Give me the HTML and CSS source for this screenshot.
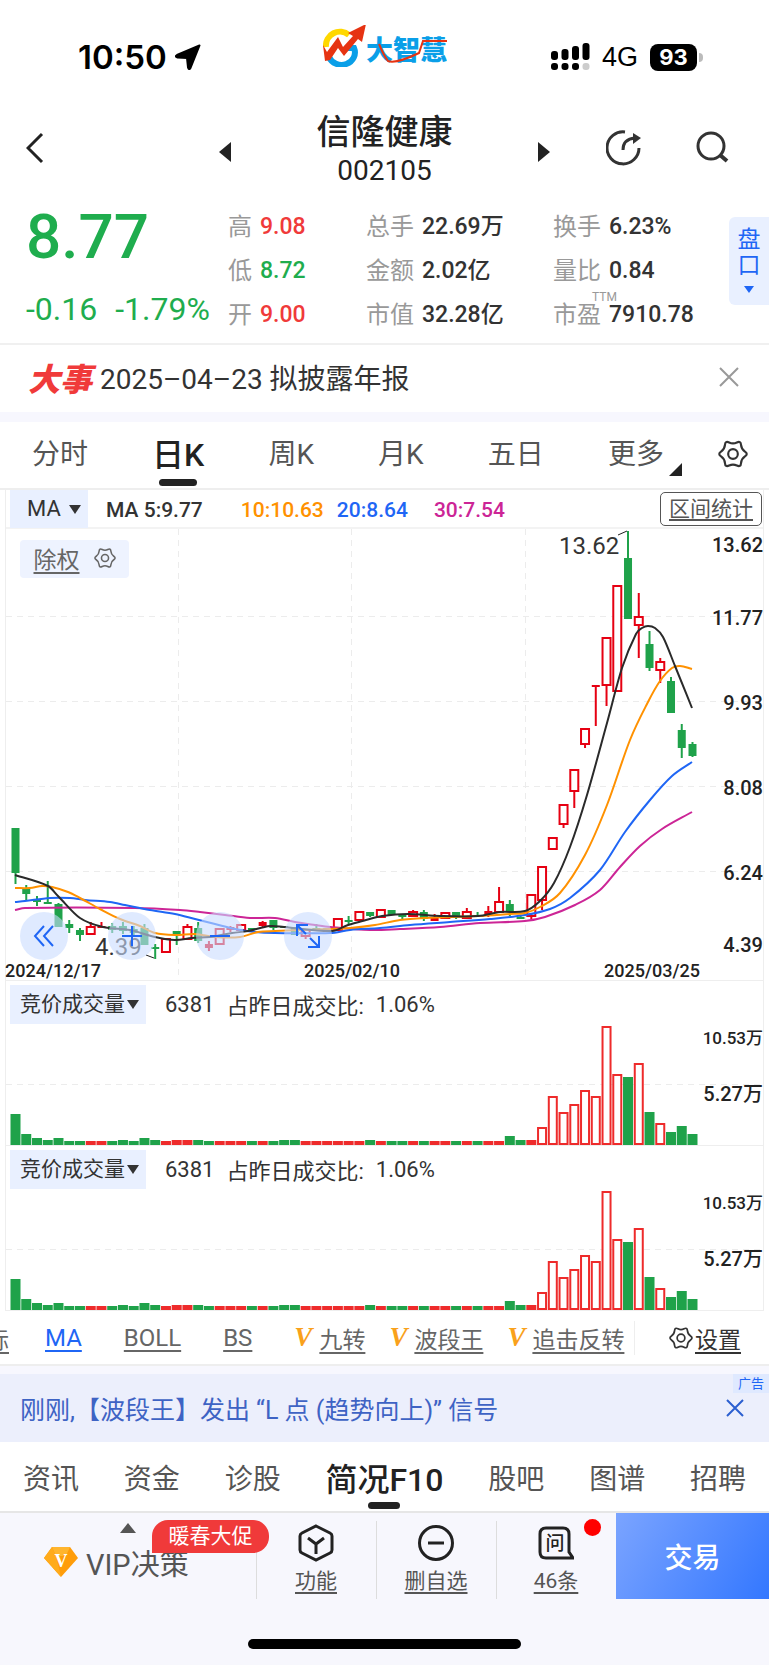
FILE: index.html
```html
<!DOCTYPE html>
<html lang="zh-CN">
<head>
    <meta charset="UTF-8">
    <meta name="viewport" content="width=device-width, initial-scale=1.0">
    <title>信隆健康 002105</title>
    <link rel="stylesheet" href="styles.css">
</head>
<body>
    <svg class="sprite" width="0" height="0" aria-hidden="true">
        <symbol id="gear" viewBox="-1 -1 28 28">
            <path d="M24.15 15.25Q20.8 17.5 20.5 21.55Q20.25 25.6 16.6 23.8Q13 22 9.4 23.8Q5.75 25.6 5.5 21.55Q5.2 17.5 1.85 15.25Q-1.5 13 1.85 10.75Q5.2 8.5 5.5 4.45Q5.75 .4 9.4 2.2Q13 4 16.6 2.2Q20.25 .4 20.5 4.45Q20.8 8.5 24.15 10.75Q27.5 13 24.15 15.25Z" fill="none" stroke="currentColor" stroke-width="2"/>
            <circle cx="13" cy="13" r="4.5" fill="none" stroke="currentColor" stroke-width="2"/>
        </symbol>
    </svg>

    <div class="status">
        <div class="clock">
            <span>10:50</span>
            <svg width="26" height="26" viewBox="0 0 26 26"><path d="M24.5 1.5L15.500 24q-1.500 2.500-2.500-.5L12 14 2.500 13.500q-3-1-.5-2.500Z" fill="#000" stroke="#000" stroke-width="2" stroke-linejoin="round"/></svg>
        </div>
        <svg class="logo" width="124" height="42" viewBox="0 0 124 42" role="img" aria-label="大智慧">
            <path d="M3 22a14 14 0 0 1 23-12" fill="none" stroke="#ffd800" stroke-width="6"/>
            <path d="M6 32a13 12 0 0 0 25-9h-9" fill="none" stroke="#0a9fe8" stroke-width="6"/>
            <path d="M0 20l4 7 11-15 5 10 10-11-5-3 18-9-4 18-4-3-14 17-6-8-8 12-5 1z" fill="#e63312"/>
            <text class="logo-text" x="43" y="35">大智慧</text>
            <path d="M56 19q5 12 9 17q8 3 31-8l4-12h24" fill="none" stroke="#e63312" stroke-width="2"/>
        </svg>
        <div class="signal">
            <svg width="39" height="28" viewBox="0 0 39 28">
                <rect x="0" y="8" width="7" height="9" rx="3"/><rect x="10.500" y="6" width="7" height="11" rx="3"/><rect x="21" y="3" width="7" height="14" rx="3"/><rect x="31.500" y="0" width="7" height="17" rx="3"/>
                <rect x="0" y="20" width="7" height="7" rx="3"/><rect x="10.500" y="20" width="7" height="7" rx="3"/><rect x="21" y="20" width="7" height="7" rx="3"/><rect x="31.500" y="20" width="7" height="7" rx="3" fill="#ccc"/>
            </svg>
            <span class="net">4G</span>
            <span class="battery">93</span>
        </div>
    </div>

    <header class="titlebar">
        <button class="back" aria-label="返回"><svg width="18" height="32" viewBox="0 0 18 32"><path d="M16 2L2 16l14 14" fill="none" stroke="#222" stroke-width="3"/></svg></button>
        <div class="stock">
            <button aria-label="上一只"><svg width="12" height="20" viewBox="0 0 12 20"><path d="M12 0v20L0 10z" fill="#222"/></svg></button>
            <div>
                <h1>信隆健康</h1>
                <p>002105</p>
            </div>
            <button aria-label="下一只"><svg width="12" height="20" viewBox="0 0 12 20"><path d="M0 0v20l12-10z" fill="#222"/></svg></button>
        </div>
        <div class="tools">
            <button aria-label="分享"><svg width="36" height="36" viewBox="0 0 36 36"><path d="M19 2A16 16 0 1 0 33 18" fill="none" stroke="#333" stroke-width="3"/><path d="M17 20q0-11 12-12" fill="none" stroke="#333" stroke-width="3"/><path d="M27 3l8 5-8 6z" fill="#333"/></svg></button>
            <button aria-label="搜索"><svg width="34" height="34" viewBox="0 0 34 34"><circle cx="16" cy="15" r="13" fill="none" stroke="#333" stroke-width="3"/><path d="M25 24l7 6" stroke="#333" stroke-width="4"/></svg></button>
        </div>
    </header>

    <section class="quote">
        <div class="price">
            <strong>8.77</strong>
            <p><span>-0.16</span><span>-1.79%</span></p>
        </div>
        <dl>
            <div><dt>高</dt><dd class="up">9.08</dd></div>
            <div><dt>总手</dt><dd>22.69万</dd></div>
            <div><dt>换手</dt><dd>6.23%</dd></div>
            <div><dt>低</dt><dd class="down">8.72</dd></div>
            <div><dt>金额</dt><dd>2.02亿</dd></div>
            <div><dt>量比</dt><dd>0.84</dd></div>
            <div><dt>开</dt><dd class="up">9.00</dd></div>
            <div><dt>市值</dt><dd>32.28亿</dd></div>
            <div><dt>市盈<sup>TTM</sup></dt><dd>7910.78</dd></div>
        </dl>
        <button class="pankou"><span>盘</span><span>口</span><i class="tri"></i></button>
    </section>

    <section class="news">
        <b>大事</b>
        <a href="#">2025–04–23 拟披露年报</a>
        <button aria-label="关闭"><svg width="20" height="20" viewBox="0 0 20 20"><path d="M1 1l18 18M19 1L1 19" stroke="#999" stroke-width="2"/></svg></button>
    </section>

    <nav class="periods">
        <a href="#">分时</a>
        <a href="#" class="active">日K</a>
        <a href="#">周K</a>
        <a href="#">月K</a>
        <a href="#">五日</a>
        <a href="#" class="more">更多</a>
        <button aria-label="图表设置"><svg width="30" height="30"><use href="#gear"/></svg></button>
    </nav>

    <main class="frame">
        <div class="ma-row">
            <label class="pick"><select aria-label="主图指标"><option>MA</option></select></label>
            <span class="ma5">MA 5:9.77</span>
            <span class="ma10">10:10.63</span>
            <span class="ma20">20:8.64</span>
            <span class="ma30">30:7.54</span>
            <button class="stats">区间统计</button>
        </div>

        <div class="kline">
            <svg id="kline" class="plot" viewBox="6 529 757 451">
                <path class="grid" d="M6 616.500H763M6 701.500H763M6 786.500H763M6 871.500H763M178.500 529V980M351.500 529V980M525.500 529V980"/>
                <g id="candles"></g>
                <g id="averages"></g>
                <path d="M618 535l9-4M146 955l8 3" stroke="#222" fill="none"/>
                <g class="note">
                    <text x="559" y="554">13.62</text>
                    <text x="95" y="955">4.39</text>
                </g>
                <g class="axis">
                    <text x="763" y="552">13.62</text>
                    <text x="763" y="625">11.77</text>
                    <text x="763" y="710">9.93</text>
                    <text x="763" y="795">8.08</text>
                    <text x="763" y="880">6.24</text>
                    <text x="763" y="952">4.39</text>
                </g>
                <g class="dates">
                    <text x="5" y="977">2024/12/17</text>
                    <text x="304" y="977">2025/02/10</text>
                    <text x="604" y="977">2025/03/25</text>
                </g>
            </svg>
            <button class="adjust"><u>除权</u><svg width="22" height="22"><use href="#gear"/></svg></button>
            <div class="controls">
                <button aria-label="左移"><svg width="24" height="24" viewBox="0 0 24 24"><path d="M12 2L3 12l9 10M21 2l-9 10 9 10"/></svg></button>
                <button aria-label="放大"><svg width="24" height="24" viewBox="0 0 24 24"><path d="M2 12h20M12 2v20"/></svg></button>
                <button aria-label="缩小"><svg width="24" height="24" viewBox="0 0 24 24"><path d="M2 12h20"/></svg></button>
                <button aria-label="全屏"><svg width="26" height="26" viewBox="0 0 26 26"><path d="M2 13V2h11M2 2l9 9M24 13v11H13M24 24l-9-9"/></svg></button>
            </div>
        </div>

        <div class="volume">
            <div class="vol-head">
                <label class="pick"><select aria-label="副图指标一"><option>竞价成交量</option></select></label>
                <span>6381</span><span>占昨日成交比:</span><span>1.06%</span>
            </div>
            <svg class="plot bars" viewBox="6 0 757 121">
                <path class="grid" d="M6 60.500H763"/>
                <g class="axis"><text class="small" x="763" y="20">10.53万</text><text x="763" y="77">5.27万</text></g>
            </svg>
        </div>
        <div class="volume">
            <div class="vol-head">
                <label class="pick"><select aria-label="副图指标二"><option>竞价成交量</option></select></label>
                <span>6381</span><span>占昨日成交比:</span><span>1.06%</span>
            </div>
            <svg class="plot bars" viewBox="6 0 757 121">
                <path class="grid" d="M6 60.500H763"/>
                <g class="axis"><text class="small" x="763" y="20">10.53万</text><text x="763" y="77">5.27万</text></g>
            </svg>
        </div>
    </main>

    <nav class="indicators">
        <a href="#" class="cut">指标</a>
        <a href="#" class="line active">MA</a>
        <a href="#" class="line">BOLL</a>
        <a href="#" class="line">BS</a>
        <span><i>V</i><a href="#">九转</a></span>
        <span><i>V</i><a href="#">波段王</a></span>
        <span><i>V</i><a href="#">追击反转</a></span>
        <button><svg width="24" height="24"><use href="#gear"/></svg><u>设置</u></button>
    </nav>

    <aside class="ad">
        <a href="#">刚刚,【波段王】发出 “L 点 (趋势向上)” 信号</a>
        <small>广告</small>
        <button aria-label="关闭广告"><svg width="18" height="18" viewBox="0 0 18 18"><path d="M1 1l16 16M17 1L1 17" stroke="#2b5fd0" stroke-width="2"/></svg></button>
    </aside>

    <nav class="sections">
        <a href="#">资讯</a>
        <a href="#">资金</a>
        <a href="#">诊股</a>
        <a href="#" class="active">简况F10</a>
        <a href="#">股吧</a>
        <a href="#">图谱</a>
        <a href="#">招聘</a>
    </nav>

    <footer>
        <div class="actions">
            <button class="vip">
                <i class="tri"></i>
                <svg width="34" height="32" viewBox="0 0 34 32"><path d="M8 1h18l8 11-17 19L0 12z" fill="#ff9d0a"/><path d="M8 1h18l-4 9H12z" fill="#ffb52e"/><path d="M0 12l8-11 4 9 5 21z" fill="#ffab1c"/><text class="gem" x="17" y="21">V</text></svg>
                <span>VIP决策</span>
                <em>暖春大促</em>
            </button>
            <button class="act">
                <svg width="36" height="38" viewBox="0 0 36 38"><path d="M18 2L32 9Q34 10 34 12V26Q34 28 32 29L18 36 4 29Q2 28 2 26V12Q2 10 4 9ZM10 14l8 6 8-6M18 20v10" fill="none" stroke="#222" stroke-width="3"/></svg>
                <u>功能</u>
            </button>
            <button class="act">
                <svg width="36" height="38" viewBox="0 0 36 38"><circle cx="18" cy="19" r="16.500" fill="none" stroke="#222" stroke-width="3"/><path d="M10 19h16" stroke="#222" stroke-width="3"/></svg>
                <u>删自选</u>
            </button>
            <button class="act">
                <svg width="36" height="38" viewBox="0 0 36 38"><path d="M8 4H25Q31 4 31 10V28L35 34H8Q2 34 2 28V10Q2 4 8 4Z" fill="none" stroke="#222" stroke-width="3"/><text class="ask" x="17" y="26">问</text></svg>
                <u>46条</u>
                <i class="dot"></i>
            </button>
            <button class="trade">交易</button>
        </div>
        <div class="home"></div>
    </footer>

    <script>
        const RED = "#ee2b2b", GREEN = "#1fa24a";
        const FIRST = 15.5, STEP = 10.746;

        // colour, high, body top, body bottom, low
        const candles = [
            ["g",828,828,873,884],["g",885,888,894,901],["g",896,900,902,906],["g",881,902,904,904],
            ["g",903,904,927,927],["g",920,924,928,933],["g",928,930,935,941],["r",922,927,934,935],
            ["f",922,926,928,928],["g",923,926,930,933],["g",922,926,931,934],["g",926,929,933,936],
            ["g",924,928,945,945],["g",944,947,949,959],["r",939,939,952,952],["g",931,931,935,945],
            ["r",924,927,939,939],["g",922,928,941,943],["f",941,944,948,951],["r",929,929,944,944],
            ["f",926,927,930,932],["r",924,925,930,930],["g",928,928,930,930],["f",921,922,926,928],
            ["g",920,920,928,930],["g",926,926,928,928],["g",927,927,935,935],["r",929,930,936,939],
            ["g",924,928,930,931],["g",928,928,930,930],["r",919,919,930,930],["g",916,920,922,924],
            ["r",911,912,920,920],["g",912,912,916,917],["r",909,910,917,917],["g",910,910,915,915],
            ["g",915,915,917,919],["r",910,912,916,917],["g",910,912,919,921],["f",914,917,921,921],
            ["r",912,913,918,919],["g",912,912,917,919],["r",908,912,918,918],["g",912,915,917,917],
            ["f",906,911,914,917],["r",887,902,912,912],["g",900,904,912,916],["g",915,917,919,919],
            ["r",894,895,916,919],["r",867,867,900,910],["r",837,838,849,850],["r",804,805,824,828],
            ["r",769,770,791,808],["r",728,729,744,748],["f",686,685,687,726],["r",638,638,685,706],
            ["r",585,586,691,691],["g",531,558,619,619],["r",593,617,625,658],["g",631,644,668,671],
            ["r",658,662,670,683],["g",677,681,713,713],["g",724,730,748,758],["g",742,744,756,757]
        ];

        const averages = {
            "#cc2596": [[15,910],[25,908],[135,908],[180,910],[200,912],[225,915],[250,918],[275,918],[295,922],[315,925],[330,927],[370,930],[400,929],[440,927],[480,923],[525,921],[545,917],[575,905],[600,890],[620,867],[640,846],[662,829],[692,812]],
            "#1f66f5": [[15,902],[25,901],[50,898],[70,898],[85,900],[110,902],[125,905],[150,910],[175,914],[195,919],[215,924],[235,929],[255,932],[275,933],[330,933],[350,930],[380,928],[410,925],[450,922],[490,919],[525,915],[550,909],[570,898],[600,870],[625,832],[650,800],[672,776],[692,762]],
            "#ff9100": [[15,888],[30,888],[42,886],[52,887],[68,892],[80,898],[100,909],[120,919],[140,926],[155,933],[175,935],[195,934],[215,937],[240,937],[258,932],[275,931],[300,930],[330,929],[350,928],[375,925],[400,920],[425,918],[478,916],[510,914],[525,913],[540,907],[560,893],[585,855],[607,805],[630,740],[648,702],[660,681],[672,668],[680,666],[692,669]],
            "#2a2a2a": [[15,875],[48,886],[58,896],[80,918],[103,927],[130,930],[155,937],[175,940],[192,938],[210,937],[232,933],[248,931],[270,926],[284,927],[332,931],[348,925],[366,920],[382,916],[408,914],[440,916],[478,916],[500,912],[525,911],[540,901],[554,883],[570,847],[587,795],[607,723],[622,668],[636,634],[642,628],[648,626],[655,628],[663,637],[675,666],[692,708]]
        };

        // bar heights, negative for a falling day
        const volumes = [-31,-11,-7,-5,-7,-4,-4,4,4,-4,-5,-4,-7,-5,4,5,5,-5,-4,4,4,4,-4,4,-4,-5,-5,4,4,4,4,4,4,-5,4,-4,-4,4,-4,4,4,-4,4,-4,4,4,-9,-5,5,17,48,32,40,54,48,118,70,-68,81,-33,21,-13,-19,-11];

        // smooth curve through the points
        function curve(p) {
            let d = `M${p[0]}`;
            for (let i = 0; i < p.length - 1; i++) {
                const a = p[i - 1] || p[i], b = p[i], c = p[i + 1], e = p[i + 2] || c;
                const third = (c[0] - b[0]) / 3;
                const s1 = (c[1] - a[1]) / (c[0] - a[0]), s2 = (e[1] - b[1]) / (e[0] - b[0]);
                d += `C${b[0] + third} ${b[1] + third * s1} ${c[0] - third} ${c[1] - third * s2} ${c}`;
            }
            return d;
        }

        document.getElementById("candles").innerHTML = candles.map(([type, high, top, bottom, low], i) => {
            const x = FIRST + i * STEP;
            const color = type === "g" ? GREEN : "#e60012";
            const body = type === "r"
                ? `<rect x="${x - 4}" y="${top}" width="8" height="${bottom - top}" fill="#fff" stroke="${color}" stroke-width="2"/>`
                : `<rect x="${x - 4}" y="${top}" width="8" height="${bottom - top}" fill="${color}"/>`;
            return `<path d="M${x} ${high}V${low}" stroke="${color}" stroke-width="2"/>${body}`;
        }).join("");

        document.getElementById("averages").innerHTML = Object.entries(averages).map(([color, points]) =>
            `<path d="${curve(points)}" fill="none" stroke="${color}" stroke-width="2"/>`
        ).join("");

        document.querySelectorAll(".bars").forEach(svg => {
            svg.innerHTML += volumes.map((v, i) => {
                const h = Math.abs(v), x = FIRST - 5 + i * STEP;
                return v > 5
                    ? `<rect x="${x + 1}" y="${121 - h}" width="8" height="${h - 1}" fill="#fff" stroke="${RED}" stroke-width="2"/>`
                    : `<rect x="${x}" y="${121 - h}" width="10" height="${h}" fill="${v < 0 ? GREEN : RED}"/>`;
            }).join("");
        });
    </script>
</body>
</html>
```

FILE: styles.css
```css
* {
    margin: 0;
    padding: 0;
    box-sizing: border-box;
}

body {
    font-family: Roboto, "Noto Sans CJK SC", sans-serif;
    background-color: #fff;
    color: #333;
    min-height: 100vh;
    display: flex;
    flex-direction: column;
}

button, select {
    font: inherit;
    color: inherit;
    background: none;
    border: none;
    cursor: pointer;
}

a {
    color: inherit;
    text-decoration: none;
}

svg {
    display: block;
}

.sprite {
    position: absolute;
}

.tri {
    border: 6px solid transparent;
    border-top: 8px solid #1f66f5;
    border-bottom: 0;
}

/* status bar */
.status {
    height: 98px;
    padding: 16px 66px 0;
    display: grid;
    grid-template-columns: 1fr auto 1fr;
    align-items: center;
    color: #000;
}

.clock {
    display: flex;
    align-items: center;
    gap: 8px;
    padding-left: 12px;
    font: 600 33px Inter, sans-serif;
}

.logo {
    margin-bottom: 22px;
}

.logo-text {
    font: 900 27px "Noto Sans CJK SC", sans-serif;
    fill: #0a9fe8;
}

.signal {
    display: flex;
    align-items: center;
    justify-content: flex-end;
    gap: 12px;
}

.net {
    font: 500 27px "Liberation Sans", sans-serif;
}

.battery {
    position: relative;
    width: 47px;
    height: 27px;
    margin-right: 6px;
    border-radius: 8px;
    background-color: #000;
    color: #fff;
    text-align: center;
    font: 700 22px/27px Inter, sans-serif;
}

.battery::after {
    content: "";
    position: absolute;
    right: -6px;
    top: 9px;
    width: 4px;
    height: 9px;
    border-radius: 0 4px 4px 0;
    background-color: #bbb;
}

/* title bar */
.titlebar {
    height: 97px;
    padding-top: 3px;
    display: grid;
    grid-template-columns: 1fr 331px 1fr;
    align-items: center;
}

.back {
    justify-self: start;
    padding-left: 26px;
}

.stock {
    display: flex;
    justify-content: space-between;
    align-items: center;
    text-align: center;
    color: #222;
}

.stock div {
    padding-top: 4px;
}

.stock button {
    padding-top: 8px;
}

.stock h1 {
    font-size: 34px;
    font-weight: 500;
    line-height: 42px;
}

.stock p {
    font-size: 28px;
    line-height: 36px;
}

.tools {
    display: flex;
    justify-content: space-between;
    padding: 0 40px 0 56px;
}

/* quote */
.quote {
    height: 150px;
    display: flex;
    border-bottom: 2px solid #f0f0f0;
}

.price {
    width: 228px;
    padding-left: 26px;
    color: #1fad4e;
}

.price strong {
    display: block;
    font-size: 62px;
    font-weight: 500;
    line-height: 84px;
}

.price p {
    display: flex;
    gap: 18px;
    font-size: 32px;
    line-height: 60px;
}

.quote dl {
    flex: 1;
    display: grid;
    grid-template-columns: 138fr 187fr 176fr;
    grid-auto-rows: 44px;
    padding-top: 10px;
    font-size: 24px;
    line-height: 44px;
}

.quote dl div {
    display: flex;
    gap: 8px;
}

.quote dt {
    position: relative;
    color: #999;
}

.quote sup {
    position: absolute;
    top: -4px;
    right: -16px;
    font-size: 12px;
    line-height: 16px;
}

.quote dd {
    font-weight: 500;
    font-size: 23px;
}

.up {
    color: #f03a3a;
}

.down {
    color: #1fad4e;
}

.pankou {
    align-self: flex-start;
    width: 40px;
    height: 88px;
    margin-top: 22px;
    padding-top: 10px;
    display: flex;
    flex-direction: column;
    align-items: center;
    border-radius: 6px 0 0 6px;
    background-color: #e9f0ff;
    color: #1f66f5;
    font-size: 23px;
    line-height: 26px;
}

.pankou .tri {
    margin-top: 7px;
    border-width: 7px 5px 0;
}

/* news */
.news {
    height: 77px;
    padding: 0 30px 4px 28px;
    display: flex;
    align-items: center;
    gap: 8px;
    border-bottom: 10px solid #f7f7fe;
    font-size: 28px;
}

.news b {
    font-size: 32px;
    font-weight: 900;
    font-style: italic;
    color: #f03a3a;
}

.news button {
    margin-left: auto;
}

/* period tabs */
.periods {
    height: 68px;
    padding: 0 21px 6px 32px;
    display: flex;
    justify-content: space-between;
    align-items: center;
    border-bottom: 2px solid #eee;
    font-size: 28px;
    color: #555;
}

.periods a {
    position: relative;
}

.periods .active, .sections .active {
    color: #222;
    font-size: 32px;
    font-weight: 500;
}

.active {
    position: relative;
}

.periods .active::after, .sections .active::after {
    content: "";
    position: absolute;
    left: calc(50% - 19px);
    bottom: -11px;
    width: 38px;
    height: 7px;
    border-radius: 4px;
    background-color: #222;
}

.more::after {
    content: "";
    position: absolute;
    right: -18px;
    bottom: -4px;
    border-left: 13px solid transparent;
    border-bottom: 13px solid #222;
}

.periods button {
    margin-left: -10px;
    padding-top: 4px;
    color: #333;
}

/* chart */
.frame {
    margin: 0 5px;
    border: 1px solid #eee;
    border-top: 0;
}

.pick {
    position: relative;
    display: block;
    background-color: #e9f0ff;
}

.pick::after {
    content: "";
    position: absolute;
    right: 7px;
    top: calc(50% - 4px);
    border: 6px solid transparent;
    border-top: 9px solid #333;
    border-bottom: 0;
    pointer-events: none;
}

.pick select {
    appearance: none;
    height: 100%;
    width: 100%;
    padding-left: 10px;
}

.ma-row {
    height: 39px;
    padding: 0 1px 0 4px;
    display: flex;
    align-items: center;
    border-bottom: 2px solid #f3f3f3;
    font-size: 21px;
    font-weight: 500;
}

.ma-row span {
    padding-top: 3px;
}

.ma-row .pick {
    width: 78px;
    height: 38px;
    margin-right: 18px;
    font-size: 22px;
    font-weight: 400;
}

.ma-row .pick select {
    padding-left: 17px;
}

.ma5 {
    margin-right: 38px;
}

.ma10 {
    margin-right: 13px;
    color: #ff9100;
}

.ma20 {
    margin-right: 26px;
    color: #1f66f5;
}

.ma30 {
    color: #cc2596;
}

.stats {
    margin-left: auto;
    width: 102px;
    height: 34px;
    border: 1px solid #555;
    border-radius: 5px;
    font-size: 21px;
    font-weight: 400;
    line-height: 30px;
    color: #555;
    text-decoration: underline;
    text-underline-offset: 3px;
}

.kline {
    position: relative;
}

.plot {
    width: 100%;
    height: auto;
    overflow: visible;
}

.grid {
    fill: none;
    stroke: #ececec;
    stroke-dasharray: 6 5;
}

.axis, .dates {
    font-size: 20px;
    font-weight: 500;
    fill: #222;
}

.axis {
    text-anchor: end;
}

.dates {
    font-size: 18px;
}

.axis .small {
    font-size: 17px;
}

.note {
    font-size: 24px;
    fill: #333;
}

/* buttons that float over the candles */
.adjust {
    position: absolute;
    left: 14px;
    top: 11px;
    width: 109px;
    height: 38px;
    padding-bottom: 2px;
    display: flex;
    align-items: center;
    justify-content: center;
    gap: 14px;
    border-radius: 4px;
    background-color: #eef3ff;
    font-size: 23px;
    color: #666;
}

.controls {
    position: absolute;
    left: 14px;
    bottom: 20px;
    display: flex;
    gap: 40px;
}

.controls button {
    width: 48px;
    height: 48px;
    display: flex;
    align-items: center;
    justify-content: center;
    border-radius: 50%;
    background-color: rgba(202, 220, 255, 0.6);
}

.controls path {
    fill: none;
    stroke: #1f66f5;
    stroke-width: 2;
}

.volume {
    border-top: 1px solid #eee;
}

.vol-head {
    height: 43px;
    padding: 3px 0 0 4px;
    display: flex;
    align-items: center;
    gap: 12px;
    font-size: 22px;
}

.vol-head .pick {
    width: 136px;
    height: 39px;
    margin-right: 7px;
    font-size: 21px;
}

/* indicators */
.indicators {
    height: 55px;
    padding-right: 28px;
    display: flex;
    align-items: center;
    border-bottom: 2px solid #eee;
    font-size: 23px;
    color: #666;
}

.indicators a, u {
    text-decoration: underline;
    text-underline-offset: 4px;
}

.indicators .cut {
    width: 9px;
    margin-right: 36px;
    display: flex;
    justify-content: flex-end;
    overflow: hidden;
    white-space: nowrap;
}

.indicators .line {
    margin-right: 42px;
    font-size: 24px;
}

.indicators .active {
    color: #1f66f5;
}

.indicators span, .indicators button {
    display: flex;
    align-items: center;
    gap: 7px;
}

.indicators span {
    margin-right: 24px;
}

.indicators span i {
    font: italic 700 27px "Liberation Serif", serif;
    color: #f9a11b;
}

.indicators button {
    gap: 2px;
    margin-left: auto;
    color: #333;
}

.indicators span:last-of-type {
    margin-right: 0;
    padding-right: 10px;
    border-right: 1px solid #eee;
}

/* ad */
.ad {
    position: relative;
    height: 76px;
    padding: 0 25px 0 20px;
    display: flex;
    justify-content: space-between;
    align-items: center;
    border-top: 8px solid #f7f7fe;
    background-color: #eceffc;
    color: #3e63c4;
    font-size: 25px;
}

.ad small {
    position: absolute;
    top: 0;
    right: 0;
    padding: 0 5px;
    background-color: #dfe9ff;
    color: #1f66f5;
    font-size: 13px;
    line-height: 19px;
}

/* section tabs */
.sections {
    height: 71px;
    padding: 0 23px;
    display: flex;
    justify-content: space-between;
    align-items: center;
    border-bottom: 2px solid #e6e6e6;
    font-size: 28px;
    color: #555;
}

.sections .active::after {
    left: calc(50% - 16px);
    bottom: -9px;
    width: 32px;
}

/* bottom bar */
footer {
    flex: 1;
    display: flex;
    flex-direction: column;
    justify-content: space-between;
    align-items: center;
    padding-bottom: 16px;
    background-color: #f7f7fd;
}

.actions {
    align-self: stretch;
    height: 86px;
    display: grid;
    grid-template-columns: 256fr 120fr 120fr 120fr 153fr;
    color: #555;
}

.vip {
    position: relative;
    display: flex;
    align-items: center;
    gap: 8px;
    padding: 12px 0 0 44px;
    font-size: 29px;
}

.vip .tri {
    position: absolute;
    left: 120px;
    top: 10px;
    border: 8px solid transparent;
    border-top: 0;
    border-bottom: 10px solid #555;
}

.vip em {
    position: absolute;
    z-index: 1;
    left: 152px;
    top: 7px;
    width: 117px;
    border-radius: 16px 16px 16px 0;
    background-color: #f03a3a;
    color: #fff;
    font-size: 21px;
    font-style: normal;
    line-height: 33px;
    text-align: center;
}

.gem {
    font: 700 18px "Liberation Serif", serif;
    fill: #fff;
    text-anchor: middle;
}

.act {
    position: relative;
    display: flex;
    flex-direction: column;
    align-items: center;
    gap: 4px;
    padding-top: 11px;
    font-size: 21px;
    line-height: 31px;
}

.act::before {
    content: "";
    position: absolute;
    left: 0;
    top: 8px;
    bottom: 0;
    border-left: 1px solid #ddd;
}

.ask {
    font-size: 19px;
    font-weight: 500;
    fill: #222;
    text-anchor: middle;
}

.dot {
    position: absolute;
    right: 15px;
    top: 6px;
    width: 17px;
    height: 17px;
    border-radius: 50%;
    background-color: #f00;
}

.trade {
    background: linear-gradient(120deg, #7ba4ff, #3377ff);
    color: #fff;
    font-size: 28px;
    font-weight: 500;
}

.home {
    width: 273px;
    height: 10px;
    border-radius: 5px;
    background-color: #000;
}
```
